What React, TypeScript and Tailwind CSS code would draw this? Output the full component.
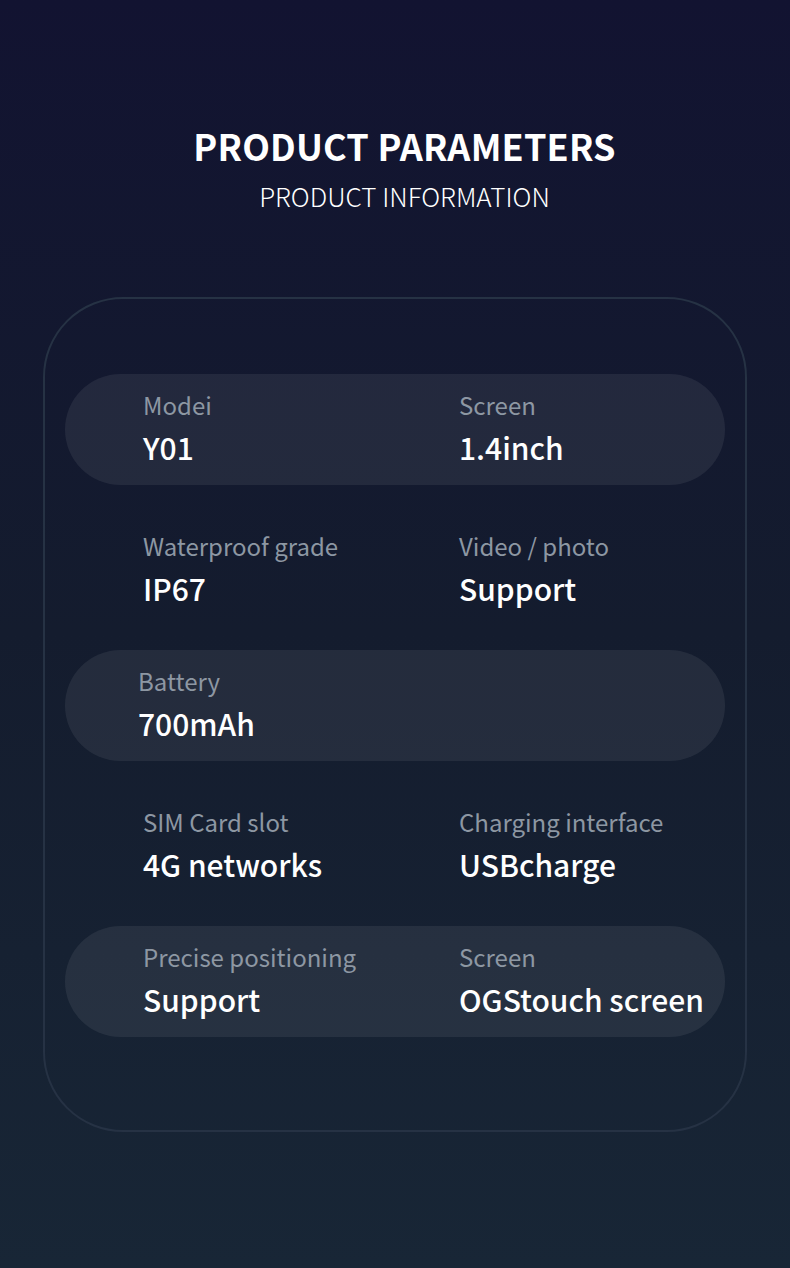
const rows = [
  { pill: true, items: [{ label: "Modei", value: "Y01" }, { label: "Screen", value: "1.4inch" }] },
  { pill: false, items: [{ label: "Waterproof grade", value: "IP67" }, { label: "Video / photo", value: "Support" }] },
  { pill: true, items: [{ label: "Battery", value: "700mAh", shift: "-ml-[5px]" }] },
  { pill: false, items: [{ label: "SIM Card slot", value: "4G networks" }, { label: "Charging interface", value: "USBcharge" }] },
  { pill: true, items: [{ label: "Precise positioning", value: "Support" }, { label: "Screen", value: "OGStouch screen" }] },
];

function Cell({ label, value, shift }: { label: string; value: string; shift?: string }) {
  return (
    <div className={`flex flex-col ${shift ?? ""}`}>
      <p className="text-[24px] leading-[30px] text-[#8d97a3]">{label}</p>
      <p className="mt-[10px] text-[30px] leading-[34px] font-medium text-white">{value}</p>
    </div>
  );
}

export default function App() {
  return (
    <div
      className="w-[790px] h-[1268px] bg-gradient-to-b from-[#121331] via-[#141c2e] to-[#182636] flex flex-col items-center"
      style={{ fontFamily: '"Noto Sans CJK SC", "Noto Sans", sans-serif' }}
    >
      {/* heading */}
      <div className="pl-[19px] flex flex-col items-center">
        <h1 className="mt-[119px] text-[36px] leading-[52px] font-bold text-white tracking-[0.2px]">PRODUCT PARAMETERS</h1>
        <h2 className="mt-[8px] text-[26px] leading-[34px] font-light text-white">PRODUCT INFORMATION</h2>
      </div>

      {/* parameter card */}
      <div className="mt-[84px] w-[704px] h-[835px] rounded-[80px] border-2 border-[#263244] flex flex-col gap-[27px] px-[20px] pt-[75px]">
        {rows.map((row, i) => (
          <div
            key={i}
            className={`h-[111px] w-[660px] rounded-full grid grid-cols-[316px_1fr] items-center pl-[78px] ${row.pill ? "bg-[#ffffff12] pb-[6px]" : "pt-[1px]"}`}
          >
            {row.items.map((it) => (
              <Cell key={it.label + it.value} label={it.label} value={it.value} shift={it.shift} />
            ))}
          </div>
        ))}
      </div>
    </div>
  );
}
